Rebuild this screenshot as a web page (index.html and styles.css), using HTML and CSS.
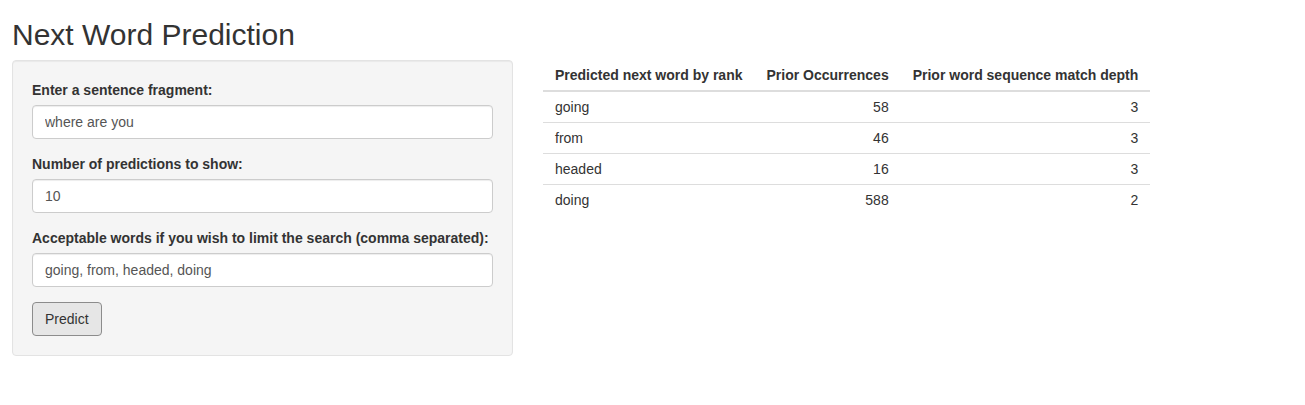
FILE: index.html
```html
<!DOCTYPE html>
<html>
<head>
<meta charset="utf-8">
<title>Next Word Prediction</title>
<link rel="stylesheet" href="styles.css">
</head>
<body>
<div class="page">
  <h2 class="title">Next Word Prediction</h2>
  <div class="layout">
    <div class="sidebar">
      <div class="well">
        <div class="form-group">
          <label class="control-label">Enter a sentence fragment:</label>
          <input class="form-control" type="text" value="where are you">
        </div>
        <div class="form-group">
          <label class="control-label">Number of predictions to show:</label>
          <input class="form-control" type="text" value="10">
        </div>
        <div class="form-group">
          <label class="control-label">Acceptable words if you wish to limit the search (comma separated):</label>
          <input class="form-control" type="text" value="going, from, headed, doing">
        </div>
        <button class="btn" type="button">Predict</button>
      </div>
    </div>
    <div class="main">
      <table class="results">
        <thead>
          <tr>
            <th>Predicted next word by rank</th>
            <th class="num">Prior Occurrences</th>
            <th class="num">Prior word sequence match depth</th>
          </tr>
        </thead>
        <tbody>
          <tr><td>going</td><td class="num">58</td><td class="num">3</td></tr>
          <tr><td>from</td><td class="num">46</td><td class="num">3</td></tr>
          <tr><td>headed</td><td class="num">16</td><td class="num">3</td></tr>
          <tr><td>doing</td><td class="num">588</td><td class="num">2</td></tr>
        </tbody>
      </table>
    </div>
  </div>
</div>
</body>
</html>
```

FILE: styles.css
```css
* { box-sizing: border-box; }
html, body {
  margin: 0;
  padding: 0;
  background: #fff;
}
body {
  font-family: "Liberation Sans", Arial, Helvetica, sans-serif;
  font-size: 14px;
  line-height: 20px;
  color: #333;
}
.page {
  padding: 0 12px;
}
.title {
  margin: 18px 0 9px;
  font-size: 30px;
  font-weight: 400;
  line-height: 33px;
  color: #333;
}
.layout {
  display: flex;
  align-items: flex-start;
  gap: 30px;
}
.sidebar {
  width: 501px;
  flex: none;
}
.well {
  background: #f5f5f5;
  border: 1px solid #e3e3e3;
  border-radius: 4px;
  padding: 19px;
  box-shadow: inset 0 1px 1px rgba(0,0,0,0.05);
}
.form-group {
  margin-bottom: 15px;
}
.control-label {
  display: block;
  font-weight: 700;
  margin-bottom: 5px;
  line-height: 20px;
}
.form-control {
  display: block;
  width: 100%;
  height: 34px;
  padding: 6px 12px;
  font-family: inherit;
  font-size: 14px;
  line-height: 20px;
  color: #555;
  background: #fff;
  border: 1px solid #ccc;
  border-radius: 4px;
  box-shadow: inset 0 1px 1px rgba(0,0,0,0.075);
  margin: 0;
}
.btn {
  display: inline-block;
  height: 34px;
  padding: 6px 12px;
  font-family: inherit;
  font-size: 14px;
  line-height: 20px;
  color: #333;
  background: #e6e6e6;
  border: 1px solid #8c8c8c;
  border-radius: 4px;
  margin: 0;
}
.main {
  flex: none;
}
.results {
  border-collapse: collapse;
  border-spacing: 0;
}
.results th,
.results td {
  padding: 5px 12px;
  line-height: 20px;
  text-align: left;
  vertical-align: top;
  white-space: nowrap;
}
.results th {
  font-weight: 700;
  border-bottom: 2px solid #ddd;
}
.results td {
  border-top: 1px solid #ddd;
}
.results tbody tr:first-child td {
  border-top: 0;
}
.results .num {
  text-align: right;
}
```
